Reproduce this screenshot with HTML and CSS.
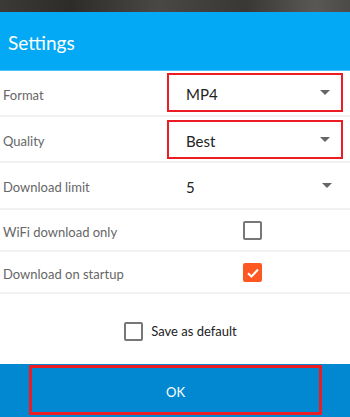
FILE: index.html
```html
<!DOCTYPE html>
<html lang="en">
<head>
  <meta charset="UTF-8" />
  <meta name="viewport" content="width=device-width, initial-scale=1.0" />
  <title>Settings</title>
  <link rel="stylesheet" href="styles.css">
</head>
<body>
  <div class="backdrop"></div>

  <div class="header">Settings</div>

  <div class="settings">
    <div class="row first">
      <div class="label">Format</div>
      <div class="value marked">
        <span>MP4</span>
        <span class="arrow"></span>
      </div>
    </div>
    <div class="row">
      <div class="label">Quality</div>
      <div class="value marked">
        <span>Best</span>
        <span class="arrow"></span>
      </div>
    </div>
    <div class="row tall">
      <div class="label">Download limit</div>
      <div class="value">
        <span>5</span>
        <span class="arrow"></span>
      </div>
    </div>
    <div class="row short">
      <div class="label">WiFi download only</div>
      <div class="check-cell"><span class="checkbox"></span></div>
    </div>
    <div class="row short">
      <div class="label">Download on startup</div>
      <div class="check-cell">
        <span class="checkbox checked">
          <svg width="14" height="14" viewBox="0 0 14 14"><path d="M2 7.2 L5.5 10.5 L12 3.5" fill="none" stroke="#fff" stroke-width="2"/></svg>
        </span>
      </div>
    </div>
  </div>

  <div class="default-row">
    <span class="checkbox"></span>
    <span>Save as default</span>
  </div>

  <div class="footer">
    <button class="ok-btn">OK</button>
  </div>
</body>
</html>
```

FILE: styles.css
```css
body {
  font-family: 'Lato', 'Open Sans', sans-serif;
  background: #fff;
  margin: 0;
  width: 350px;
  height: 417px;
  overflow: hidden;
}
.backdrop {
  height: 12px;
  background: linear-gradient(90deg, #3b3a37 0%, #2e2c29 20%, #4a4845 45%, #3a3835 70%, #5a5855 90%, #4d4b48 100%);
}
.header {
  height: 58px;
  background: #03a9f4;
  border-bottom: 1px solid #4fc3f7;
  color: #fff;
  font-size: 19px;
  padding: 2px 0 0 8px;
  box-sizing: border-box;
  height: 59px;
  display: flex;
  align-items: center;
}
.row {
  display: grid;
  grid-template-columns: 167px 176px;
  align-items: center;
  height: 44px;
  border-bottom: 2px solid #f1f1f1;
}
.row.first .value {
  margin-top: -2px;
}
.row.tall {
  height: 45px;
}
.row.short {
  height: 40px;
}
.label {
  color: #666;
  font-size: 13px;
  padding: 3px 0 0 3px;
}
.value {
  display: flex;
  justify-content: space-between;
  align-items: center;
  height: 39px;
  box-sizing: border-box;
  padding: 3px 11px 0 19px;
  font-size: 15px;
  color: #222;
}
.value.marked {
  border: 2px solid #ec1c24;
  padding-left: 17px;
}
.arrow {
  width: 0;
  height: 0;
  margin-top: -3px;
  border-left: 5px solid transparent;
  border-right: 5px solid transparent;
  border-top: 5px solid #666;
}
.check-cell {
  padding: 1px 0 0 76px;
  display: flex;
}
.checkbox {
  width: 19px;
  height: 19px;
  box-sizing: border-box;
  border: 2px solid #777;
  border-radius: 2px;
  display: inline-flex;
  align-items: center;
  justify-content: center;
}
.checkbox.checked {
  background: #ff5722;
  border-color: #ff5722;
}
.default-row {
  height: 70px;
  box-sizing: border-box;
  padding: 4px 0 0 11px;
  display: flex;
  align-items: center;
  justify-content: center;
  gap: 8px;
  font-size: 13px;
  color: #222;
}
.footer {
  height: 53px;
  background: #0288d1;
  padding: 1px 28px 0 29px;
  box-sizing: border-box;
}
.ok-btn {
  width: 100%;
  height: 50px;
  background: transparent;
  border: 3px solid #ec1c24;
  color: #fff;
  font-family: 'Lato', sans-serif;
  font-size: 13px;
  padding-top: 4px;
  cursor: pointer;
}
```
